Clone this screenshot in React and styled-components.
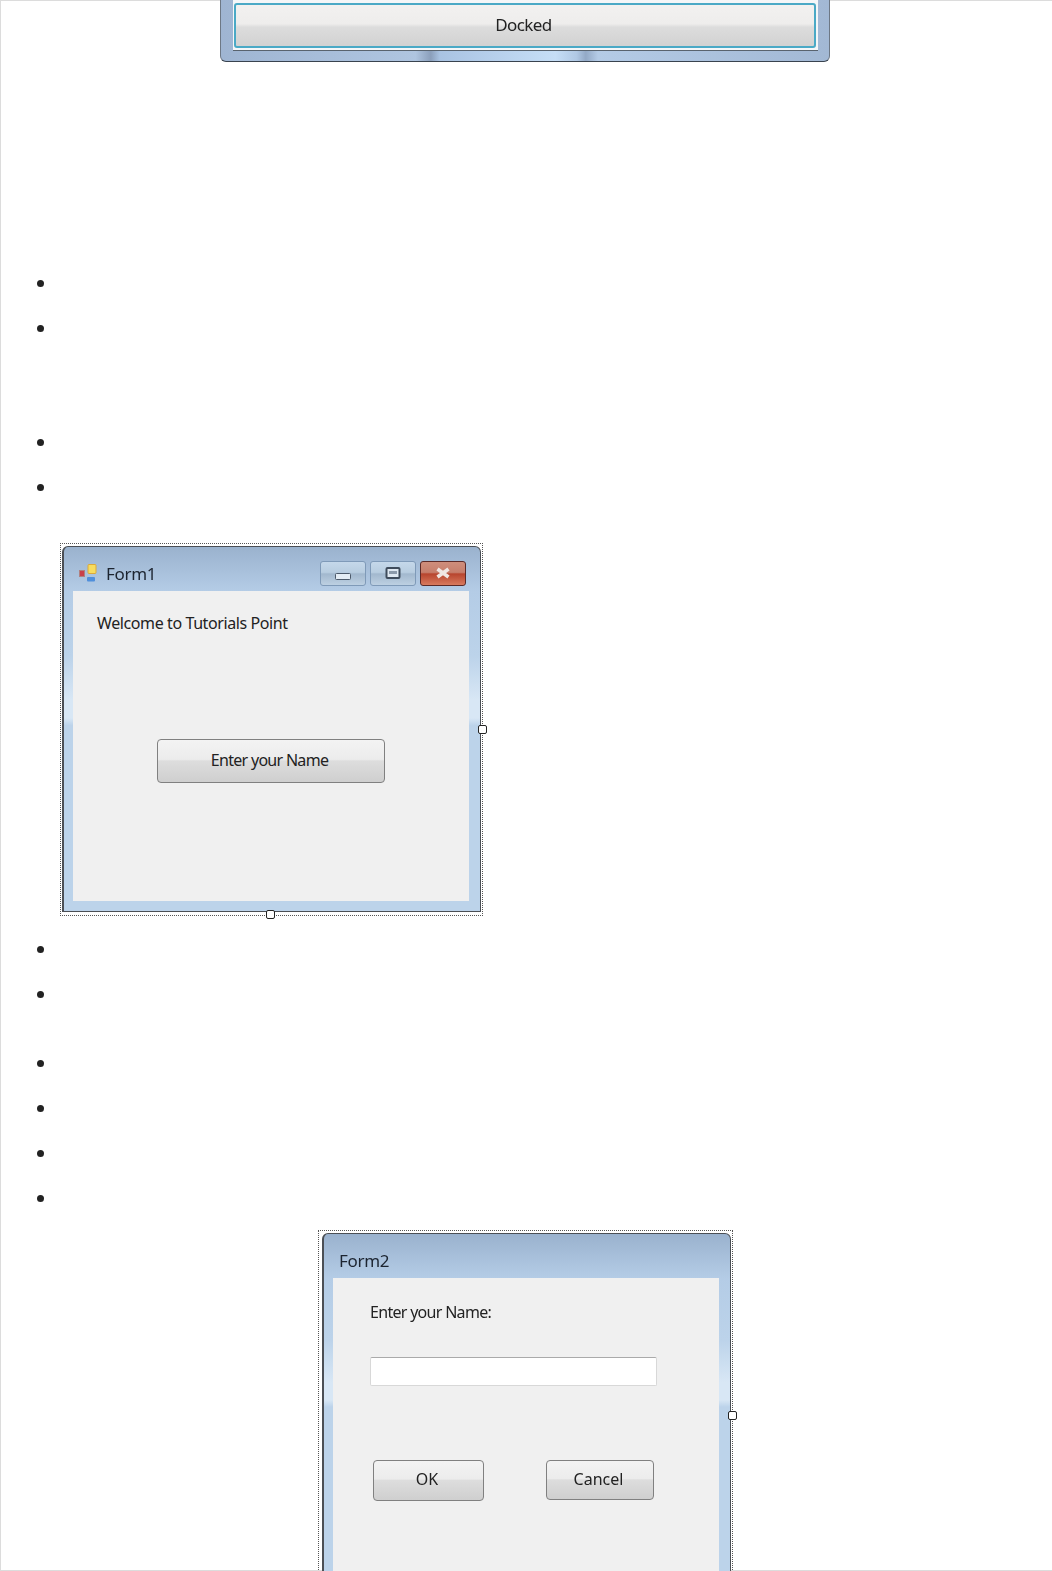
import React from 'react';
import styled, { createGlobalStyle } from 'styled-components';

const GlobalStyle = createGlobalStyle`
  html, body { margin: 0; padding: 0; background: #fff; }
`;

const Page = styled.div`
  position: relative;
  width: 1052px;
  height: 1571px;
  overflow: hidden;
  background: #fff;
  box-shadow: inset 1px 1px 0 #dcdcdc, inset 0 -1px 0 #dcdcdc;
  font-family: "Noto Sans", "Liberation Sans", sans-serif;
  color: #222;
`;

const DockedWindow = styled.div`
  box-sizing: border-box;
  width: 610px;
  height: 62px;
  margin-left: 220px;
  padding: 0 11px 0 12px;
  border-radius: 0 0 6px 6px;
  border-bottom: 1px solid #39434f;
  border-left: 1px solid #6d7885;
  border-right: 1px solid #6d7885;
  background: linear-gradient(90deg, #9fb5d2 0%, #afc5e0 32%, #8b9fbb 34.5%, #a9c3e2 36%, #c6def6 55%, #b0c8e4 58.5%, #93a9c6 60%, #b4cbe6 62%, #a2b8d4 100%);
`;

const DockedClient = styled.div`
  box-sizing: border-box;
  height: 51px;
  padding: 3px 2px 2px 1px;
  background: #f4f6f8;
  border-bottom: 1px solid #59636e;
`;

const DockedButton = styled.div`
  box-sizing: border-box;
  height: 45px;
  display: flex;
  align-items: center;
  justify-content: center;
  padding: 0 3px 2px 0;
  border: 2px solid #4aa9c6;
  border-radius: 3px;
  background: linear-gradient(#f2f1f0 0%, #eeedec 46%, #dcdcdc 54%, #d2d2d2 100%);
  font-size: 17px;
  letter-spacing: -0.6px;
  filter: blur(0.4px);
`;

const Bullets = styled.ul`
  margin: ${(p) => p.$top}px 0 0;
  padding: 0 0 0 58px;
  font-size: 20px;
`;

const Bullet = styled.li`
  height: 45px;
  line-height: 45px;
`;

const Selection = styled.div`
  position: relative;
  box-sizing: border-box;
  width: ${(p) => p.$width}px;
  height: ${(p) => p.$height}px;
  margin: ${(p) => p.$top}px 0 0 ${(p) => p.$left}px;
  padding: 2px 1px 3px ${(p) => p.$inset}px;
  border: 1px dotted #555;
`;

const Handle = styled.span`
  position: absolute;
  z-index: 1;
  box-sizing: border-box;
  width: 9px;
  height: 9px;
  background: #fff;
  border: 1px solid #222;
  border-radius: 2px;
  ${(p) => (p.$side === 'right'
    ? `right: -5px; top: ${p.$pos}px;`
    : `bottom: -4px; left: ${p.$pos}px;`)}
`;

const Chrome = styled.div`
  box-sizing: border-box;
  display: flex;
  flex-direction: column;
  height: 100%;
  padding: 0 11px 10px 9px;
  border: 1px solid #4b4f55;
  border-left-width: 2px;
  border-radius: 6px 6px 0 0;
  background: linear-gradient(#9ab2ce 0, #b4cce6 44px, #bcd3ea 30%, #d8e7f5 42%, #d8e7f5 47%, #bcd3ea 49%, #bcd3ea 100%);
  filter: blur(0.35px);
`;

const TitleBar = styled.div`
  box-sizing: border-box;
  display: flex;
  align-items: center;
  flex: none;
  height: 44px;
  padding: 8px 3px 0 ${(p) => p.$indent}px;
  font-size: 17px;
  letter-spacing: -0.3px;
  color: #1c2430;
`;

const TitleText = styled.span`
  margin-left: ${(p) => p.$indent || 0}px;
  flex: 1;
`;

const WindowButtons = styled.div`
  display: flex;
  gap: 4px;
`;

const WindowButton = styled.div`
  box-sizing: border-box;
  display: flex;
  align-items: center;
  justify-content: center;
  width: 46px;
  height: 25px;
  border-radius: 3px;
  border: 1px solid ${(p) => (p.$close ? '#5b2a28' : '#7f9ab8')};
  background: ${(p) => (p.$close
    ? 'linear-gradient(#cf8e7c 0%, #c77f6c 45%, #b8452e 52%, #d87a5e 100%)'
    : 'linear-gradient(#c5d8ea 0%, #b8cde0 45%, #a2b8ce 52%, #bdd0e2 100%)')};
`;

const Client = styled.div`
  box-sizing: border-box;
  flex: 1;
  min-height: 0;
  background: #f0f0f0;
`;

const FormLabel = styled.div`
  font-size: 16px;
  letter-spacing: ${(p) => p.$spacing}px;
  line-height: 22px;
  color: #222;
  margin: ${(p) => p.$top}px 0 0 ${(p) => p.$left}px;
`;

const PushButton = styled.div`
  box-sizing: border-box;
  display: flex;
  align-items: center;
  justify-content: center;
  width: ${(p) => p.$width}px;
  height: ${(p) => p.$height}px;
  padding: 0 3px 3px 0;
  border: 1.5px solid #808080;
  border-radius: 4px;
  background: linear-gradient(#f3f3f3 0%, #ececec 46%, #dddddd 50%, #cfcfcf 100%);
  font-size: 16px;
  letter-spacing: ${(p) => p.$spacing || 0}px;
  color: #222;
`;

const EnterButton = styled(PushButton)`
  margin: 105px 0 0 84px;
`;

const NameInput = styled.div`
  box-sizing: border-box;
  width: 287px;
  height: 29px;
  margin: 34px 0 0 37px;
  background: #fff;
  border: 1px solid #d8d8d8;
  border-top-color: #aaa;
  border-radius: 2px;
`;

const ButtonRow = styled.div`
  display: flex;
  align-items: flex-start;
  gap: 62px;
  margin: 74px 0 0 40px;
`;

const AppIcon = () => (
  <svg width="19" height="19" viewBox="0 0 19 19">
    <rect x="1.5" y="6.5" width="5" height="6" fill="#c9404a" stroke="#b08080" />
    <rect x="10" y="0.5" width="8" height="9" rx="1" fill="#f7dc5e" stroke="#dba93a" />
    <rect x="9" y="13" width="8" height="4.5" rx="1" fill="#4f8fdc" />
  </svg>
);

const MinimizeGlyph = () => (
  <svg width="18" height="23" viewBox="0 0 18 23">
    <rect x="1.5" y="11.5" width="15" height="6" rx="1" fill="#e4edf5" stroke="#4c5a6b" />
  </svg>
);

const MaximizeGlyph = () => (
  <svg width="18" height="14" viewBox="0 0 18 14">
    <rect x="2.5" y="2" width="13" height="10" rx="1" fill="#dfe8f1" stroke="#3f4c5c" strokeWidth="2" />
    <rect x="5" y="5" width="8" height="3" fill="#8c9aaa" />
  </svg>
);

const CloseGlyph = () => (
  <svg width="18" height="14" viewBox="0 0 18 14">
    <path d="M3.5 3 L14.5 11 M14.5 3 L3.5 11" stroke="#f0e6e2" strokeWidth="3.6" />
  </svg>
);

const emptyRows = (n) => Array.from({ length: n }, (_, i) => <Bullet key={i} />);

export default function App() {
  return (
    <Page>
      <GlobalStyle />
      <DockedWindow>
        <DockedClient>
          <DockedButton>Docked</DockedButton>
        </DockedClient>
      </DockedWindow>

      <Bullets $top={199}>{emptyRows(2)}</Bullets>
      <Bullets $top={69}>{emptyRows(2)}</Bullets>

      <Selection $left={60} $top={33} $width={423} $height={373} $inset={1}>
        <Handle $side="right" $pos={181} />
        <Handle $side="bottom" $pos={205} />
        <Chrome>
          <TitleBar $indent={5}>
            <AppIcon />
            <TitleText $indent={9}>Form1</TitleText>
            <WindowButtons>
              <WindowButton><MinimizeGlyph /></WindowButton>
              <WindowButton><MaximizeGlyph /></WindowButton>
              <WindowButton $close><CloseGlyph /></WindowButton>
            </WindowButtons>
          </TitleBar>
          <Client>
            <FormLabel $top={21} $left={24} $spacing={-0.4}>Welcome to Tutorials Point</FormLabel>
            <EnterButton $width={228} $height={44} $spacing={-0.7}>Enter your Name</EnterButton>
          </Client>
        </Chrome>
      </Selection>

      <Bullets $top={11}>{emptyRows(2)}</Bullets>
      <Bullets $top={24}>{emptyRows(4)}</Bullets>

      <Selection $left={318} $top={9} $width={415} $height={362} $inset={3}>
        <Handle $side="right" $pos={180} />
        <Chrome>
          <TitleBar $indent={6}>
            <TitleText>Form2</TitleText>
          </TitleBar>
          <Client>
            <FormLabel $top={23} $left={37} $spacing={-0.7}>Enter your Name:</FormLabel>
            <NameInput />
            <ButtonRow>
              <PushButton $width={111} $height={41}>OK</PushButton>
              <PushButton $width={108} $height={40}>Cancel</PushButton>
            </ButtonRow>
          </Client>
        </Chrome>
      </Selection>
    </Page>
  );
}
